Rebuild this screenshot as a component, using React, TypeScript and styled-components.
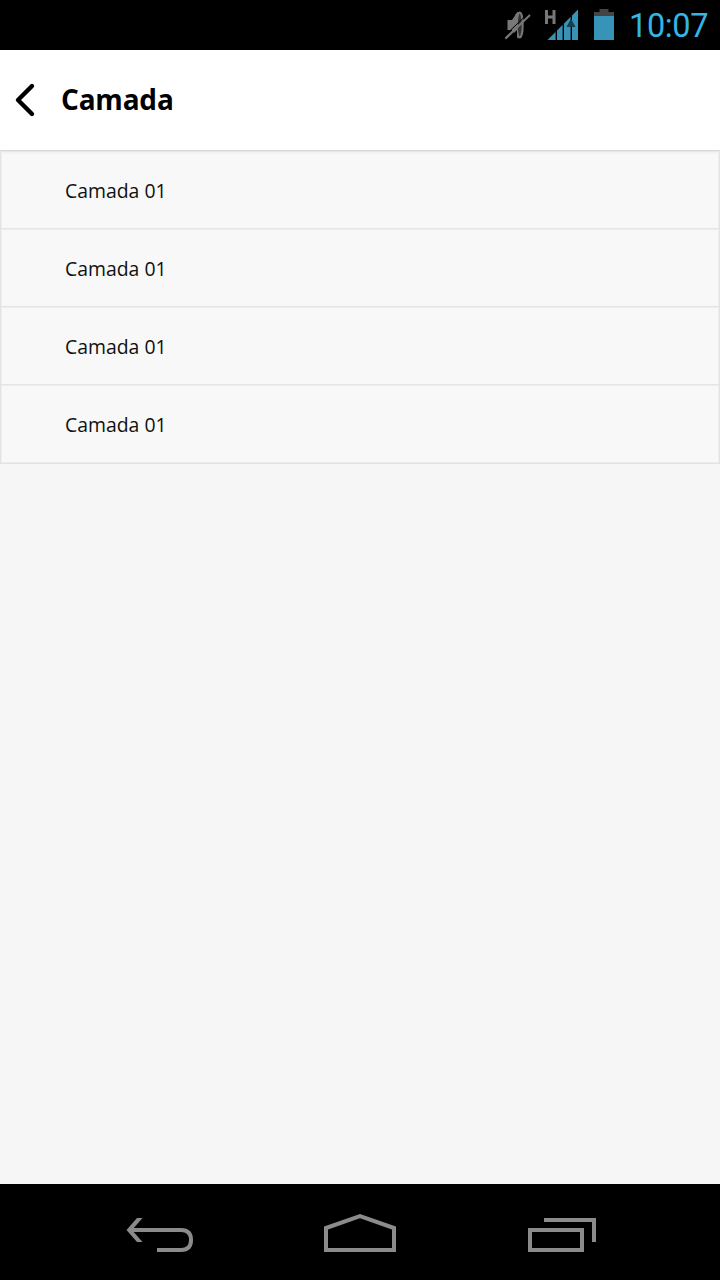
import React from 'react';
import styled, { createGlobalStyle } from 'styled-components';

const GlobalStyle = createGlobalStyle`
  * { box-sizing: border-box; }
  body { margin: 0; background: #f6f6f6; }
`;

const Screen = styled.div`
  display: flex;
  flex-direction: column;
  width: 720px;
  height: 1280px;
  background: #f6f6f6;
  font-family: 'Open Sans', sans-serif;
`;

const StatusBar = styled.div`
  display: flex;
  justify-content: space-between;
  align-items: center;
  height: 50px;
  padding: 0 12px 0 503px;
  background: #000;
`;

const Clock = styled.span`
  padding-top: 2px;
  font: 400 32.5px/50px Roboto, sans-serif;
  letter-spacing: -0.4px;
  color: #33b5e5;
`;

const Header = styled.header`
  display: flex;
  align-items: center;
  height: 100px;
  padding-left: 14px;
  background: #fff;
`;

const Title = styled.h1`
  margin: 0 0 2px 25px;
  font-size: 28px;
  line-height: 38px;
  letter-spacing: -0.2px;
  font-weight: 700;
  color: #000;
`;

const List = styled.ul`
  margin: 0;
  padding: 0;
  list-style: none;
  border: 1px solid #e2e2e2;
  border-top: 1px solid #dadada;
`;

const Row = styled.li`
  display: flex;
  align-items: center;
  height: 78px;
  padding: 3px 0 0 64px;
  background: #f8f8f8;
  border-bottom: 1px solid #e4e4e4;
  box-shadow: inset 1px 0 #f0f0f0, inset -1px 0 #f0f0f0, inset 0 1px #ececec;
  font-size: 19.4px;
  line-height: 26px;
  font-weight: 400;
  color: #111;
  &:first-child { box-shadow: inset 1px 0 #f0f0f0, inset -1px 0 #f0f0f0, inset 0 1px #e6e6e6, inset 0 4px 3px -2px #efefef; }
  &:last-child { border-bottom-color: #ececec; }
`;

const Content = styled.main`
  flex: 1;
`;

const NavBar = styled.nav`
  height: 96px;
  background: #000;
`;

const rows = ['Camada 01', 'Camada 01', 'Camada 01', 'Camada 01'];

export default function App() {
  return (
    <Screen>
      <GlobalStyle />
      <StatusBar>
        <svg width="112" height="50" viewBox="503 0 112 50">
          <path d="M507.500 20h4.500l5.500-8h2v26h-2l-5.500-8h-4.500z" fill="#777" />
          <ellipse cx="519.700" cy="25" rx="3" ry="12.500" fill="#333" stroke="#777" strokeWidth="2" />
          <path d="M515 15L518 12V25L515 28z" fill="#777" />
          <path d="M504 36.500L528 13.500" stroke="#000" strokeWidth="1" />
          <path d="M505.500 38.500L530 15" stroke="#777" strokeWidth="2" />
          <path d="M507 40L517 30V39z" fill="#000" />
          <path d="M505.500 38.500L516 28.400" stroke="#777" strokeWidth="2" />
          <path d="M546.500 10v14M554 10v14M546.500 17h7.500" stroke="#777" strokeWidth="3" fill="none" />
          <path d="M547.500 40L578 9.500V40z" fill="#3793b8" />
          <path d="M556.300 28v12M563.300 22v18M571.300 14v26" stroke="#000" strokeWidth="1.400" />
          <path d="M566.500 27L571 18.500L575.500 27z" fill="#173f50" />
          <path d="M599.500 9h9v3h5.500v4h-20v-4h5.500z" fill="#444" />
          <path d="M594 16h20v24h-20z" fill="#3793b8" />
        </svg>
        <Clock>10:07</Clock>
      </StatusBar>
      <Header>
        <svg width="22" height="36" viewBox="14 82 22 36">
          <path d="M32 86L18 100L32 114" fill="none" stroke="#000" strokeWidth="4.400" strokeLinecap="round" strokeLinejoin="round" />
        </svg>
        <Title>Camada</Title>
      </Header>
      <Content>
        <List>
          {rows.map((label, i) => <Row key={i}>{label}</Row>)}
        </List>
      </Content>
      <NavBar>
        <svg width="720" height="96" viewBox="0 1184 720 96" fill="none" stroke="#8b8b8b" strokeWidth="4">
          <path d="M129 1230H181C188 1230 191 1234 191 1240S188 1250 181 1250H157" />
          <path d="M142.500 1218H137L126.500 1230L137 1242H142.500L132 1230z" fill="#8b8b8b" stroke="none" />
          <path d="M326 1250V1228L360 1216L394 1228V1250z" />
          <path d="M530 1230h52v20h-52zM544 1220h50v22" />
        </svg>
      </NavBar>
    </Screen>
  );
}
